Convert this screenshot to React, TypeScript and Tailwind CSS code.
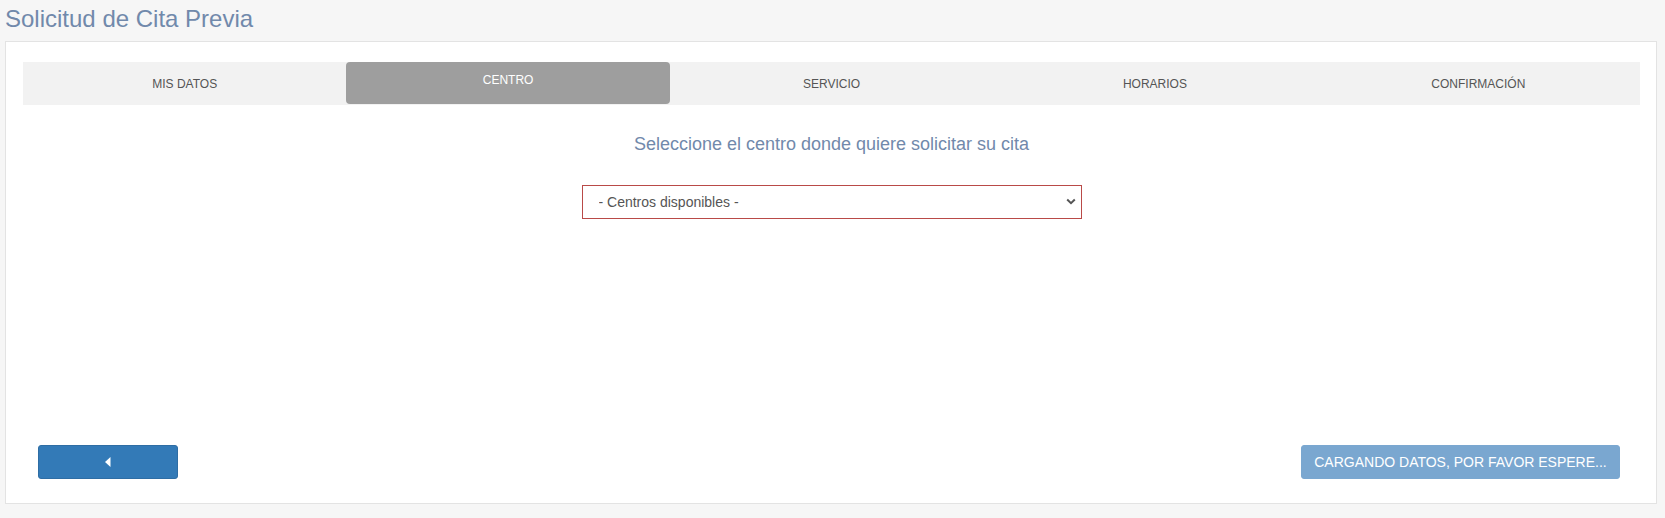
import React from "react";

const tabs = ["MIS DATOS", "CENTRO", "SERVICIO", "HORARIOS", "CONFIRMACIÓN"];

export default function App() {
  const active = 1;

  return (
    <div
      className="h-[518px] bg-[#f6f6f6] text-[#555]"
      style={{ fontFamily: '"Liberation Sans", Arial, sans-serif' }}
    >
      <h1 className="pl-[5px] pt-[5px] text-[24px] leading-[28px] text-[#7189ab]">
        Solicitud de Cita Previa
      </h1>

      {/* main card */}
      <div className="ml-[5px] mt-[8px] flex h-[463px] w-[1652px] flex-col border border-[#e3e3e3] bg-white pl-[17px] pr-[16px] pt-[20px]">
        {/* steps */}
        <div className="flex h-[43px] bg-[#f2f2f2]">
          {tabs.map((t, i) =>
            i === active ? (
              <div
                key={t}
                className="flex h-[42px] flex-1 justify-center rounded-[4px] bg-[#9e9e9e] pt-[11px] text-[12px] leading-[14px] text-white"
              >
                {t}
              </div>
            ) : (
              <div
                key={t}
                className="flex flex-1 items-center justify-center text-[12px] leading-[14px] text-[#555]"
              >
                {t}
              </div>
            )
          )}
        </div>

        <h2 className="mt-[29px] text-center text-[18px] leading-[20px] text-[#7189ab]">
          Seleccione el centro donde quiere solicitar su cita
        </h2>

        <div className="mt-[31px] flex justify-center">
          <div className="relative w-[500px]">
            <select className="h-[34px] w-full appearance-none border border-[#b94a48] bg-white pl-[16px] text-[14px] text-[#555] outline-none">
              <option>- Centros disponibles -</option>
            </select>
            <svg
              className="pointer-events-none absolute right-[6px] top-[13px]"
              width="10"
              height="8"
              viewBox="0 0 10 8"
            >
              <path
                d="M1.2 1.6 L5 5.2 L8.8 1.6"
                fill="none"
                stroke="#555"
                strokeWidth="2"
              />
            </svg>
          </div>
        </div>

        {/* footer buttons */}
        <div className="mt-auto flex items-center justify-between pb-[24px] pl-[15px] pr-[20px]">
          <button className="flex h-[34px] w-[140px] items-center justify-center rounded-[3px] border border-[#2e6da4] bg-[#337ab7]">
            <svg width="6" height="10" viewBox="0 0 6 10">
              <path d="M5.5 0 L0 5 L5.5 10 Z" fill="white" />
            </svg>
          </button>
          <button className="h-[34px] w-[319px] rounded-[3px] border border-[#7aa7d0] bg-[#7aa7d0] text-[14px] text-white">
            CARGANDO DATOS, POR FAVOR ESPERE...
          </button>
        </div>
      </div>
    </div>
  );
}
